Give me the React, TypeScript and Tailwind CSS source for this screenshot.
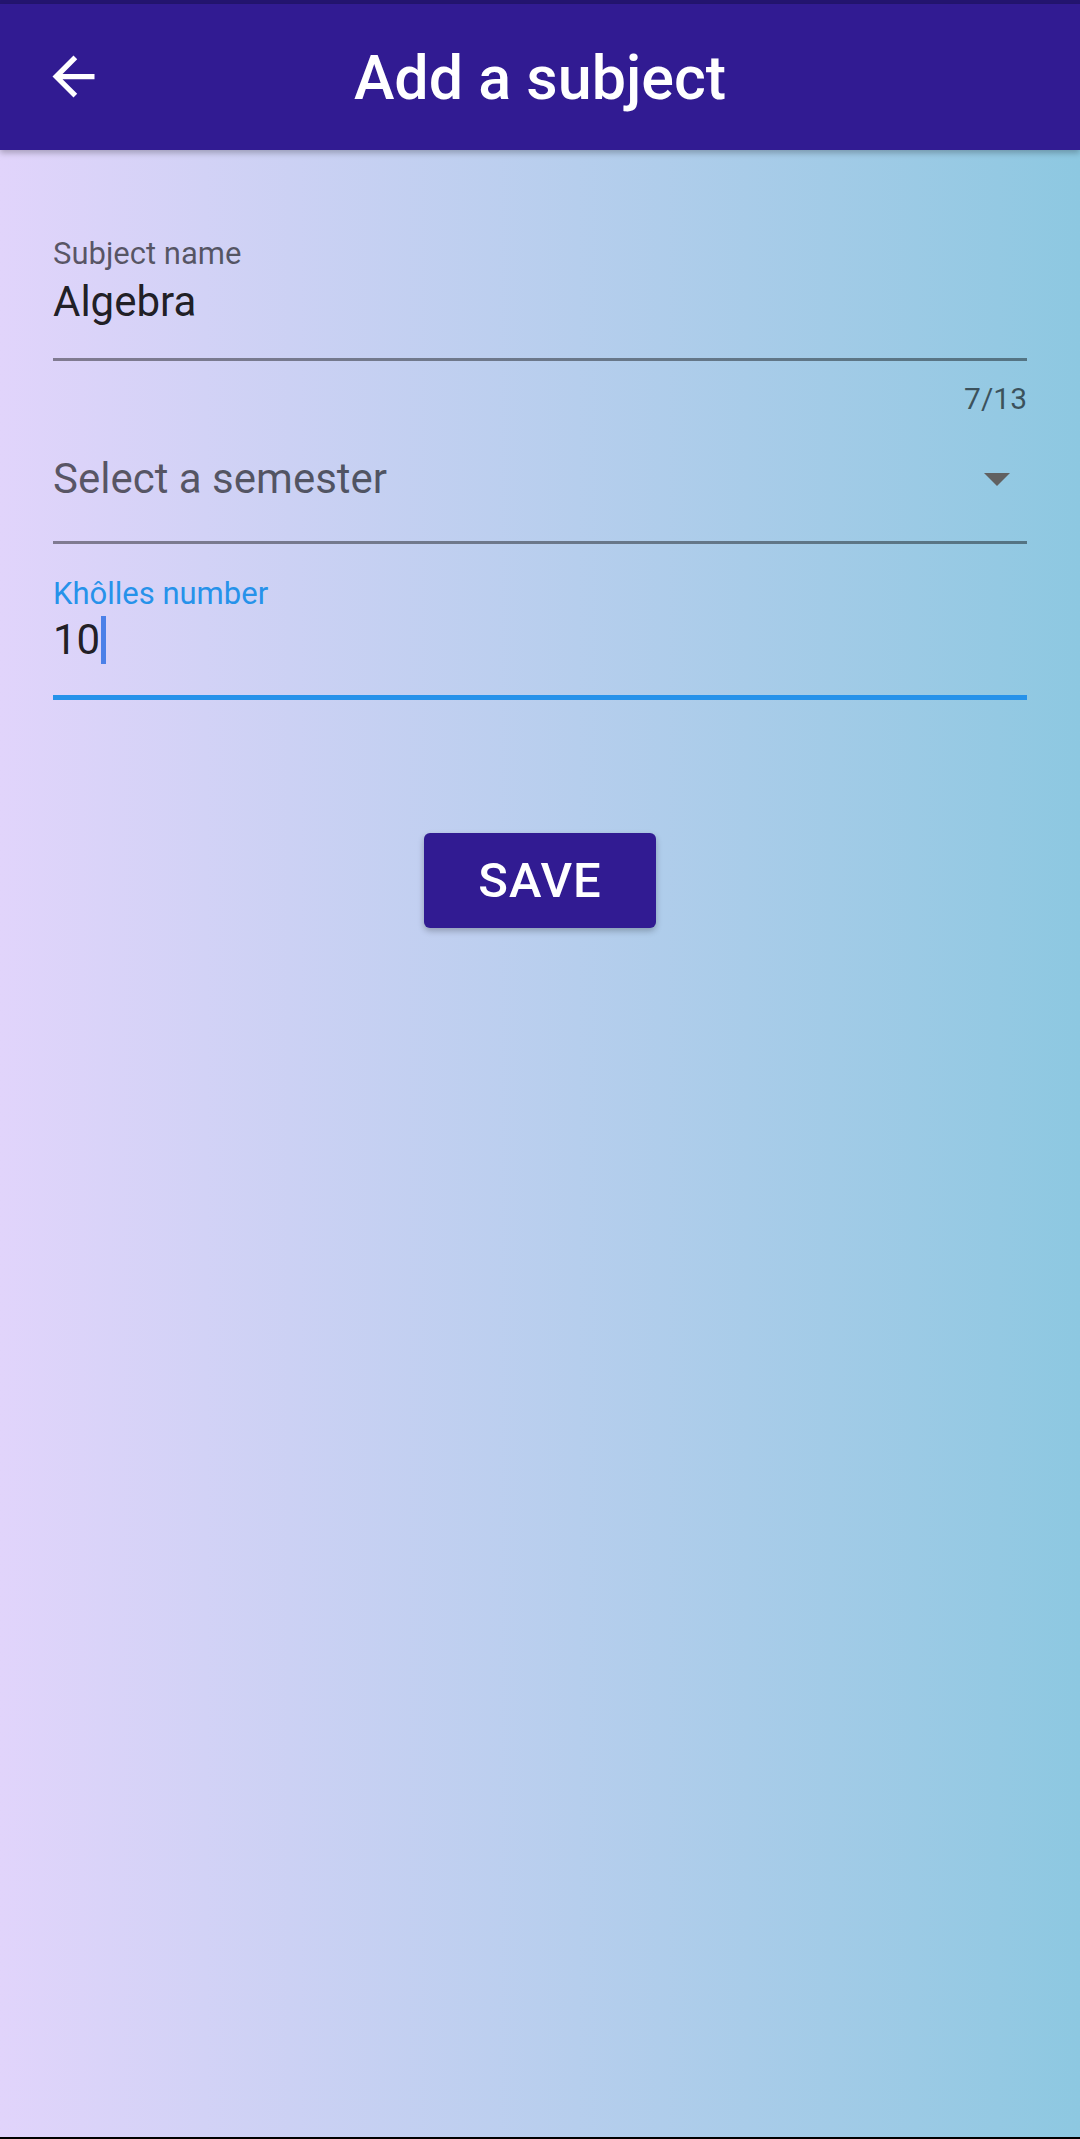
import React from "react";

export default function App() {
  return (
    <div
      className="w-[1080px] h-[2139px] flex flex-col bg-gradient-to-r from-[#e1d4fb] to-[#8dc8e1] overflow-hidden"
      style={{ fontFamily: "Roboto, 'Noto Sans', sans-serif" }}
    >
      <div className="h-[4px] bg-[#241570]" />
      <header className="relative h-[146px] bg-[#311b92] flex items-center justify-center shadow-[0_3px_6px_rgba(0,0,0,0.25)] z-10">
        <button className="absolute left-[42px] top-[41px] w-[63px] h-[63px]" aria-label="Back">
          <svg viewBox="0 0 24 24" width="63" height="63" fill="white">
            <path d="M20 11H7.83l5.59-5.59L12 4l-8 8 8 8 1.41-1.41L7.83 13H20v-2z" />
          </svg>
        </button>
        <h1 className="text-white font-medium text-[61px] leading-[74px] mt-[2px]">Add a subject</h1>
      </header>

      <main className="flex-1 flex flex-col px-[53px]">
        <div className="mt-[86px] text-[31px] leading-[36px] text-[rgba(0,0,0,0.6)]">Subject name</div>
        <div className="mt-[5px] text-[42px] leading-[50px] text-[rgba(0,0,0,0.87)]">Algebra</div>
        <div className="mt-[31px] h-[3px] bg-[rgba(0,0,0,0.42)]" />
        <div className="mt-[20px] text-right text-[30px] leading-[36px] text-[rgba(0,0,0,0.6)]">7/13</div>

        <div className="mt-[37px] flex items-center justify-between">
          <span className="text-[42px] leading-[50px] text-[rgba(0,0,0,0.6)]">Select a semester</span>
          <svg width="26" height="13" viewBox="0 0 26 13" className="mr-[17px]">
            <polygon points="0,0 26,0 13,13" fill="#616161" />
          </svg>
        </div>
        <div className="mt-[37px] h-[3px] bg-[rgba(0,0,0,0.42)]" />

        <div className="mt-[32px] text-[31px] leading-[36px] text-[#2692ea]">Khôlles number</div>
        <div className="mt-[3px] flex items-center h-[50px] text-[42px] leading-[50px] text-[rgba(0,0,0,0.87)]">
          <span>10</span>
          <span className="ml-[1px] w-[5px] h-[48px] bg-[#4b80e8]" />
        </div>
        <div className="mt-[30px] h-[5px] bg-[#2692ea]" />

        <div className="mt-[133px] flex justify-center">
          <button className="w-[232px] h-[95px] rounded-[6px] bg-[#311b92] text-white font-medium text-[49px] leading-[56px] tracking-[1px] shadow-[0_3px_6px_rgba(0,0,0,0.25)]">
            SAVE
          </button>
        </div>
      </main>
      <div className="h-[2px] bg-black" />
    </div>
  );
}
